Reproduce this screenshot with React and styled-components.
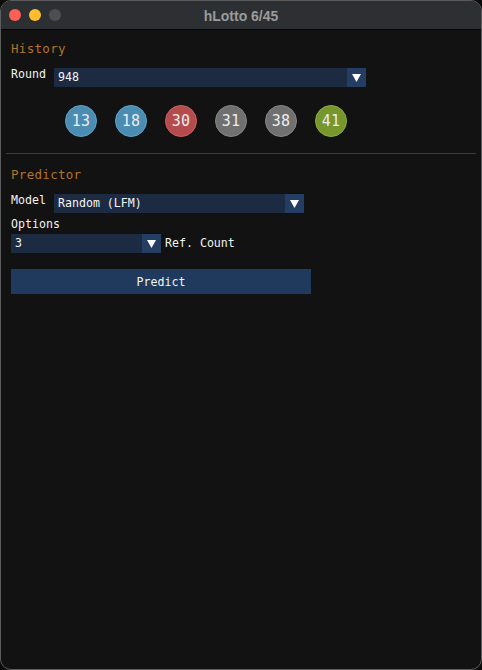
import React from "react";
import styled, { createGlobalStyle } from "styled-components";

const Global = createGlobalStyle`
  html, body { margin: 0; padding: 0; background: #0b0b0b; }
  #root { width: 482px; height: 670px; }
`;

const Window = styled.div`
  box-sizing: border-box;
  width: 482px;
  height: 670px;
  border: 1px solid #5c5c5e;
  border-radius: 11px;
  overflow: hidden;
  background: #121212;
  display: flex;
  flex-direction: column;
`;

const TitleBar = styled.div`
  position: relative;
  height: 28px;
  flex: none;
  background: #2d3032;
  border-bottom: 1px solid #050505;
  display: flex;
  align-items: center;
  justify-content: center;
`;

const Lights = styled.div`
  position: absolute;
  left: 8px;
  top: 8px;
  display: flex;
  gap: 8px;
`;

const Light = styled.span`
  width: 12px;
  height: 12px;
  border-radius: 50%;
  background: ${(p) => p.$c};
`;

const Title = styled.div`
  font-family: "Liberation Sans", Arial, sans-serif;
  font-weight: bold;
  font-size: 14px;
  color: #9a9b9c;
  margin-top: 1px;
`;

const Content = styled.div`
  flex: 1;
  padding: 12px 10px 0 10px;
  display: flex;
  flex-direction: column;
  font-family: "DejaVu Sans Mono", "Liberation Mono", monospace;
  font-size: 11.6px;
  color: #f2f2f2;
`;

const Header = styled.div`
  height: 13px;
  line-height: 13px;
  color: #b0742a;
  font-size: 12.5px;
  letter-spacing: 0.3px;
  margin-top: ${(p) => p.$mt || 0}px;
`;

const Row = styled.div`
  display: flex;
  align-items: ${(p) => (p.$top ? "flex-start" : "center")};
  margin-top: ${(p) => p.$mt || 0}px;
`;

const Label = styled.div`
  width: 43px;
  flex: none;
  line-height: 13px;
`;

const PlainText = styled.div`
  line-height: 13px;
  height: 13px;
  margin-top: ${(p) => p.$mt || 0}px;
  margin-left: ${(p) => p.$ml || 0}px;
`;

const Combo = styled.div`
  width: ${(p) => p.$w}px;
  height: 19px;
  display: flex;
  background: #1c2a42;
  flex: none;
`;

const ComboValue = styled.div`
  flex: 1;
  padding-left: 4px;
  line-height: 19px;
  color: #f4f4f4;
`;

const ArrowBtn = styled.div`
  width: 19px;
  height: 19px;
  background: #233d63;
  display: flex;
  align-items: center;
  justify-content: center;
`;

const Balls = styled.div`
  display: flex;
  gap: 18px;
  margin-top: 18px;
  margin-left: 54px;
`;

const Ball = styled.div`
  box-sizing: border-box;
  width: 32px;
  height: 32px;
  border-radius: 50%;
  background: ${(p) => p.$bg};
  border: 1px solid ${(p) => p.$ring};
  display: flex;
  align-items: center;
  justify-content: center;
  font-size: 15px;
  color: #ececec;
  letter-spacing: 0.3px;
`;

const Separator = styled.div`
  height: 1px;
  background: #3d3d40;
  margin: 16px -5px 0 -5px;
`;

const PredictButton = styled.div`
  width: 300px;
  height: 25px;
  background: #203a5e;
  display: flex;
  align-items: center;
  justify-content: center;
  margin-top: 16px;
  color: #f2f2f2;
`;

const Arrow = () => (
  <svg width="9" height="8" viewBox="0 0 9 8">
    <polygon points="0,0 9,0 4.5,8" fill="#ffffff" />
  </svg>
);

const ComboBox = ({ w, value }) => (
  <Combo $w={w}>
    <ComboValue>{value}</ComboValue>
    <ArrowBtn>
      <Arrow />
    </ArrowBtn>
  </Combo>
);

const balls = [
  { n: 13, bg: "#4a8cb2", ring: "#5ea2c9" },
  { n: 18, bg: "#4a8cb2", ring: "#5ea2c9" },
  { n: 30, bg: "#b44c4e", ring: "#c9605f" },
  { n: 31, bg: "#707070", ring: "#868686" },
  { n: 38, bg: "#707070", ring: "#868686" },
  { n: 41, bg: "#77962c", ring: "#8cab3c" },
];

export default function App() {
  return (
    <>
      <Global />
      <Window>
        <TitleBar>
          <Lights>
            <Light $c="#fe5f57" />
            <Light $c="#febc2e" />
            <Light $c="#4c4f52" />
          </Lights>
          <Title>hLotto 6/45</Title>
        </TitleBar>
        <Content>
          <Header>History</Header>
          <Row $mt={13} $top>
            <Label>Round</Label>
            <ComboBox w={312} value="948" />
          </Row>
          <Balls>
            {balls.map((b) => (
              <Ball key={b.n} $bg={b.bg} $ring={b.ring}>
                {b.n}
              </Ball>
            ))}
          </Balls>
          <Separator />
          <Header $mt={14}>Predictor</Header>
          <Row $mt={13} $top>
            <Label>Model</Label>
            <ComboBox w={250} value="Random (LFM)" />
          </Row>
          <PlainText $mt={5}>Options</PlainText>
          <Row $mt={3}>
            <ComboBox w={150} value="3" />
            <PlainText $ml={4}>Ref. Count</PlainText>
          </Row>
          <PredictButton>Predict</PredictButton>
        </Content>
      </Window>
    </>
  );
}
